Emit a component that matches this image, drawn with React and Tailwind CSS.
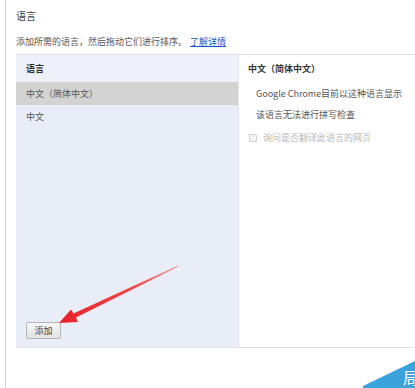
const font = { fontFamily: '"Noto Sans CJK SC", "Liberation Sans", sans-serif' }

// Chrome 语言设置：左侧语言列表 + 右侧详情
export default function App() {
  return (
    <div
      className="relative h-[388px] w-[415px] overflow-hidden bg-white text-[#333]"
      style={font}
    >
      <div className="ml-[5px] flex h-full flex-col border-l border-[#cfcfcf] pl-[10px]">
        <div className="flex h-[30px] items-center text-[10px] text-[#444]">语言</div>
        <div className="mt-[4px] flex h-[16px] items-center text-[9px] text-[#555]">
          添加所需的语言，然后拖动它们进行排序。
          <a className="ml-[3px] text-[#1a55c7] underline">了解详情</a>
        </div>

        {/* 表格 */}
        <div className="mt-[4px] flex h-[294px] border-b border-t border-[#dfe2e8]">
          <div className="flex w-[222px] flex-col bg-[#e9edf8]">
            <div className="flex h-[27px] items-center bg-[#eef1f9] pl-[10px] text-[9px] font-bold text-[#333]">
              语言
            </div>
            <div className="flex h-[23px] items-center bg-[#d3d3d3] pl-[10px] text-[9px] text-[#555]">
              中文（简体中文）
            </div>
            <div className="flex h-[23px] items-center pl-[10px] text-[9px] text-[#555]">
              中文
            </div>
            <div className="flex-1" />
            <div className="pb-[8px] pl-[10px]">
              <button
                type="button"
                className="flex h-[17px] w-[35px] items-center justify-center rounded-[2px] border border-[#b5b5b5] bg-gradient-to-b from-[#f7f7f7] to-[#e3e3e3] text-[9px] text-[#444]"
              >
                添加
              </button>
            </div>
          </div>

          <div className="flex flex-1 flex-col border-l border-[#e3e6ec] bg-white">
            <div className="flex h-[27px] items-center pl-[9px] text-[9px] font-bold text-[#333]">
              中文（简体中文）
            </div>
            <div className="flex h-[23px] items-center pl-[17px] text-[9px] text-[#555]">
              Google Chrome目前以这种语言显示
            </div>
            <div className="flex h-[20px] items-center pl-[17px] text-[9px] text-[#555]">
              该语言无法进行拼写检查
            </div>
            <div className="mt-[3px] flex h-[20px] items-center gap-[6px] pl-[10px] text-[9px] text-[#b8b8b8]">
              <span className="h-[8px] w-[8px] rounded-[1px] border border-[#d0d0d0] bg-[#f4f4f4]" />
              询问是否翻译此语言的网页
            </div>
          </div>
        </div>
      </div>

      {/* 红色箭头 */}
      <svg className="absolute left-0 top-0" width="415" height="388" viewBox="0 0 415 388">
        <defs>
          <linearGradient id="arr" x1="178" y1="266" x2="60" y2="324" gradientUnits="userSpaceOnUse">
            <stop offset="0" stopColor="#f3a0a0" />
            <stop offset="0.35" stopColor="#ef4a4a" />
            <stop offset="1" stopColor="#e8202a" />
          </linearGradient>
        </defs>
        <polygon
          points="178,265.5 178.6,266.6 76,317.5 78,322 59,323 71,309.5 73.5,313.5"
          fill="url(#arr)"
        />
      </svg>

      {/* 角标水印 */}
      <div className="absolute bottom-0 right-0 h-[36px] w-[52px]">
        <div className="absolute left-[2px] top-[0px] h-[10px] w-[48px] bg-white/90" />
        <svg className="absolute bottom-0 right-0" width="52" height="30" viewBox="0 0 52 30">
          <polygon points="0,28 52,3 52,30 0,30" fill="#3aa3dc" />
        </svg>
        <span className="absolute bottom-[3px] right-[-4px] text-[16px] leading-none text-white">
          局
        </span>
      </div>
    </div>
  )
}
